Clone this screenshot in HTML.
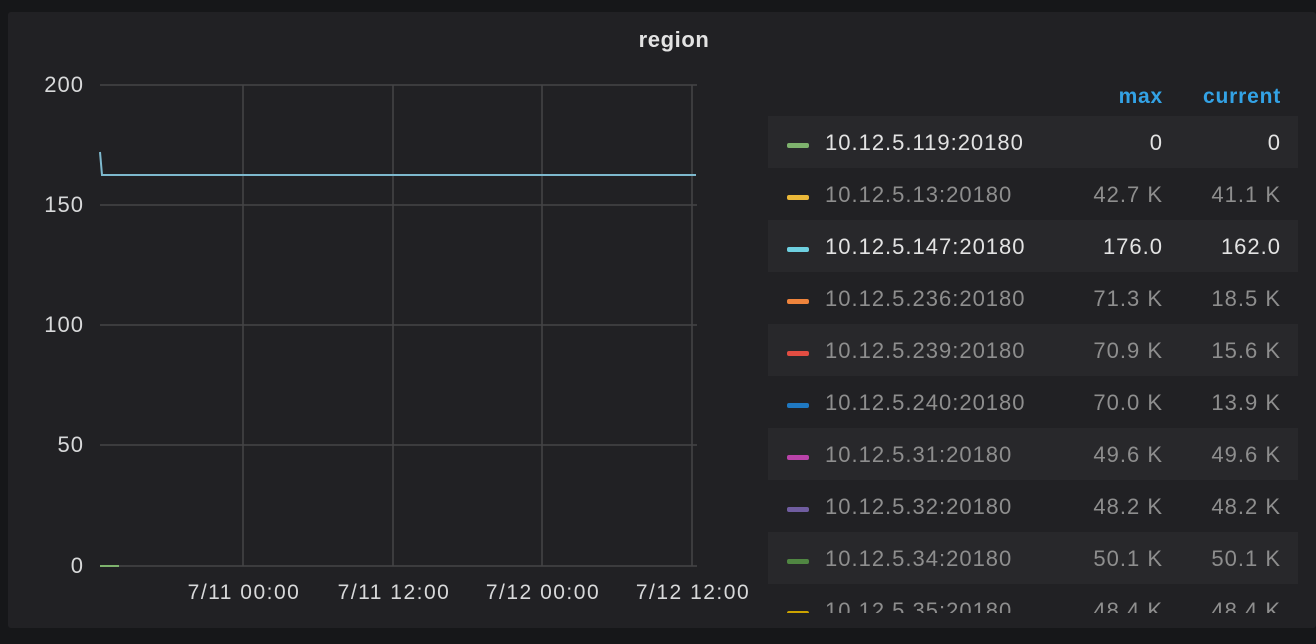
<!DOCTYPE html>
<html><head><style>
html,body{margin:0;padding:0;background:#161719;width:1316px;height:644px;overflow:hidden;font-family:"Liberation Sans",sans-serif}
.panel{position:absolute;left:8px;top:12px;width:1308px;height:616px;background:#212124;border-radius:3px}
.title{position:absolute;left:0;width:1348px;top:27px;text-align:center;color:#e3e3e3;font-size:22px;font-weight:bold;letter-spacing:0.6px}
.yl{position:absolute;right:1233px;color:#d8d9da;font-size:22px;line-height:20px;text-align:right;letter-spacing:1px;margin-right:-1px}
.xl{position:absolute;top:583px;color:#d8d9da;font-size:21px;line-height:20px;width:160px;text-align:center;letter-spacing:1.5px}
.hdr{position:absolute;top:85px;color:#33a2e5;font-size:21px;font-weight:bold;letter-spacing:0.8px}
.legend{position:absolute;left:768px;top:116px;width:530px;height:497px;overflow:hidden}
.row{position:relative;height:52px;font-size:22px;color:#8e8e8e;letter-spacing:1px}
.row.alt{background:#28282b}
.row.b{color:#e3e3e3}
.sw{position:absolute;left:19px;top:27px;width:22px;height:5px;border-radius:2px}
.nm{position:absolute;left:57px;top:14px}
.mx{position:absolute;right:135px;top:14px}
.cu{position:absolute;right:17px;top:14px}
</style></head><body>
<div class="panel"></div>
<div class="title">region</div>
<svg style="position:absolute;left:0;top:0" width="760" height="644">
<g stroke="#454547" stroke-width="1.5">
<line x1="100" y1="85" x2="697" y2="85"/><line x1="100" y1="205" x2="697" y2="205"/>
<line x1="100" y1="325" x2="697" y2="325"/><line x1="100" y1="445" x2="697" y2="445"/>
<line x1="100" y1="566" x2="697" y2="566"/>
<line x1="243" y1="85" x2="243" y2="566"/><line x1="393" y1="85" x2="393" y2="566"/>
<line x1="542" y1="85" x2="542" y2="566"/><line x1="692" y1="85" x2="692" y2="566"/>
</g>
<polyline points="100,152 102,175 696,175" fill="none" stroke="#7eb9ce" stroke-width="2"/>
<line x1="100" y1="566" x2="119" y2="566" stroke="#7eb26d" stroke-width="2"/>
</svg>
<div class="yl" style="top:75px">200</div>
<div class="yl" style="top:195px">150</div>
<div class="yl" style="top:315px">100</div>
<div class="yl" style="top:435px">50</div>
<div class="yl" style="top:556px">0</div>
<div class="xl" style="left:164px">7/11 00:00</div>
<div class="xl" style="left:314px">7/11 12:00</div>
<div class="xl" style="left:463px">7/12 00:00</div>
<div class="xl" style="left:613px">7/12 12:00</div>
<div class="hdr" style="right:153px">max</div>
<div class="hdr" style="right:35px">current</div>
<div class="legend">
<div class="row alt b"><span class="sw" style="background:#7eb26d"></span><span class="nm">10.12.5.119:20180</span><span class="mx">0</span><span class="cu">0</span></div>
<div class="row"><span class="sw" style="background:#eab839"></span><span class="nm">10.12.5.13:20180</span><span class="mx">42.7 K</span><span class="cu">41.1 K</span></div>
<div class="row alt b"><span class="sw" style="background:#6ed0e0"></span><span class="nm">10.12.5.147:20180</span><span class="mx">176.0</span><span class="cu">162.0</span></div>
<div class="row"><span class="sw" style="background:#ef843c"></span><span class="nm">10.12.5.236:20180</span><span class="mx">71.3 K</span><span class="cu">18.5 K</span></div>
<div class="row alt"><span class="sw" style="background:#e24d42"></span><span class="nm">10.12.5.239:20180</span><span class="mx">70.9 K</span><span class="cu">15.6 K</span></div>
<div class="row"><span class="sw" style="background:#1f78c1"></span><span class="nm">10.12.5.240:20180</span><span class="mx">70.0 K</span><span class="cu">13.9 K</span></div>
<div class="row alt"><span class="sw" style="background:#ba43a9"></span><span class="nm">10.12.5.31:20180</span><span class="mx">49.6 K</span><span class="cu">49.6 K</span></div>
<div class="row"><span class="sw" style="background:#705da0"></span><span class="nm">10.12.5.32:20180</span><span class="mx">48.2 K</span><span class="cu">48.2 K</span></div>
<div class="row alt"><span class="sw" style="background:#508642"></span><span class="nm">10.12.5.34:20180</span><span class="mx">50.1 K</span><span class="cu">50.1 K</span></div>
<div class="row"><span class="sw" style="background:#cca300"></span><span class="nm">10.12.5.35:20180</span><span class="mx">48.4 K</span><span class="cu">48.4 K</span></div>
</div>
</body></html>
